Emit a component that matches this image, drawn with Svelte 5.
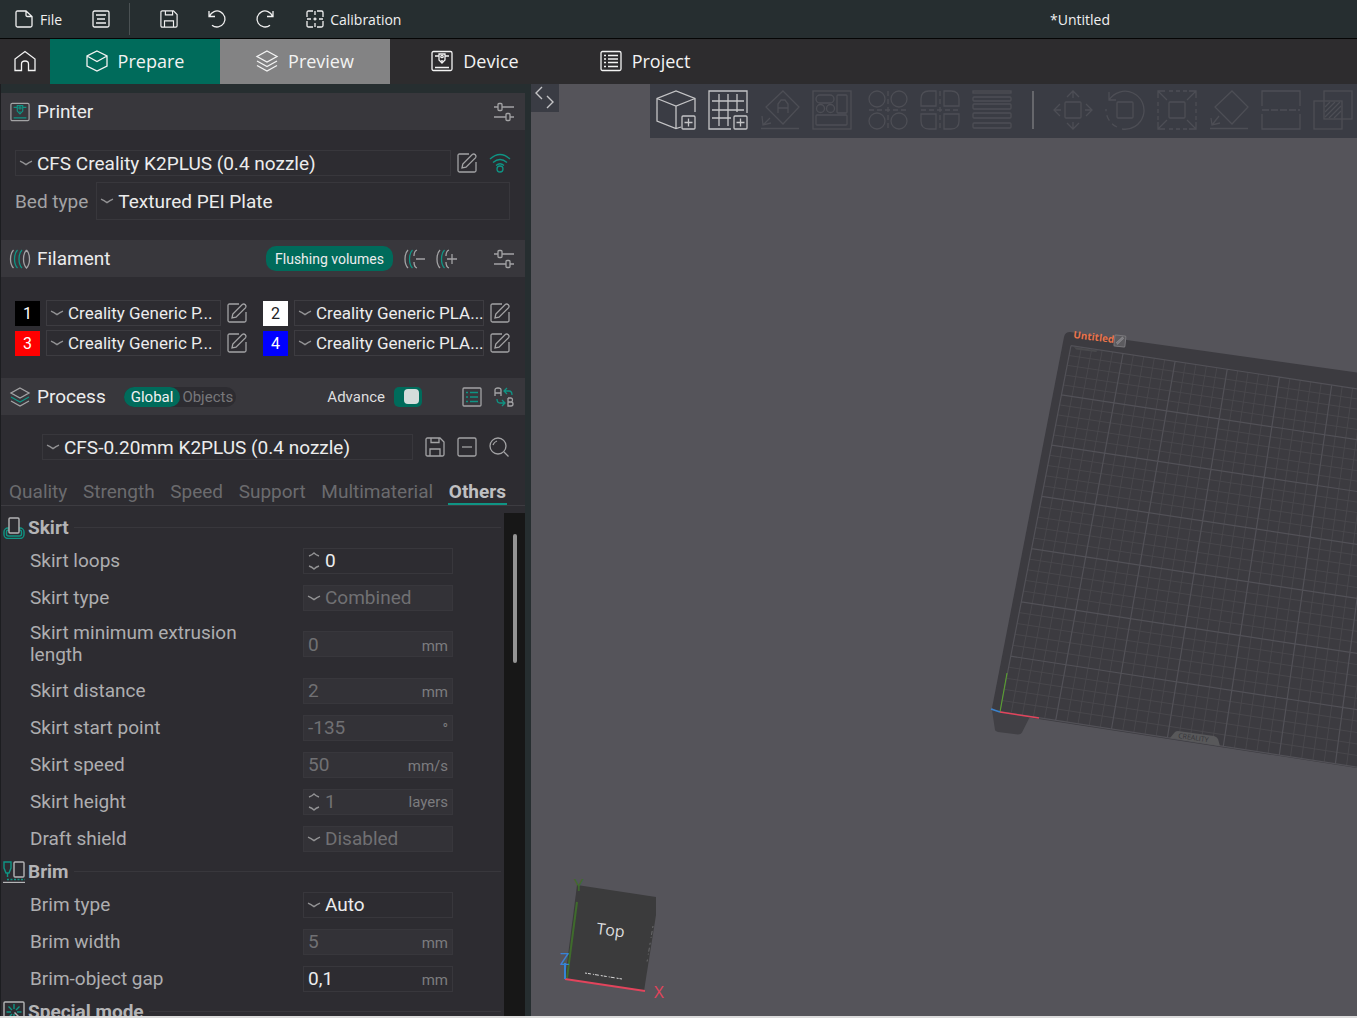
<script lang="ts">
  type Row = {
    id: string;
    label: string;
    kind: 'text' | 'spin' | 'select';
    value: string;
    unit?: string;
    disabled?: boolean;
  };

  const views = ['Prepare', 'Preview', 'Device', 'Project'];
  let view = $state('Prepare');

  const filaments = [
    { id: 1, name: 'Creality Generic P...', color: '#000000', ink: '#ffffff' },
    { id: 2, name: 'Creality Generic PLA...', color: '#ffffff', ink: '#222222' },
    { id: 3, name: 'Creality Generic P...', color: '#ff0000', ink: '#ffffff' },
    { id: 4, name: 'Creality Generic PLA...', color: '#0000ff', ink: '#ffffff' }
  ];

  const pages = ['Quality', 'Strength', 'Speed', 'Support', 'Multimaterial', 'Others'];
  let page = $state('Others');
  let scope = $state('Global');
  let advance = $state(true);

  const skirt: Row[] = [
    { id: 'loops', label: 'Skirt loops', kind: 'spin', value: '0' },
    { id: 'type', label: 'Skirt type', kind: 'select', value: 'Combined', disabled: true },
    { id: 'min', label: 'Skirt minimum extrusion length', kind: 'text', value: '0', unit: 'mm', disabled: true },
    { id: 'distance', label: 'Skirt distance', kind: 'text', value: '2', unit: 'mm', disabled: true },
    { id: 'start', label: 'Skirt start point', kind: 'text', value: '-135', unit: '°', disabled: true },
    { id: 'speed', label: 'Skirt speed', kind: 'text', value: '50', unit: 'mm/s', disabled: true },
    { id: 'height', label: 'Skirt height', kind: 'spin', value: '1', unit: 'layers', disabled: true },
    { id: 'shield', label: 'Draft shield', kind: 'select', value: 'Disabled', disabled: true }
  ];

  const brim: Row[] = [
    { id: 'brim-type', label: 'Brim type', kind: 'select', value: 'Auto' },
    { id: 'brim-width', label: 'Brim width', kind: 'text', value: '5', unit: 'mm', disabled: true },
    { id: 'brim-gap', label: 'Brim-object gap', kind: 'text', value: '0,1', unit: 'mm' }
  ];

  // Projects bed coordinates (one unit = 50 mm) onto the view plane
  const corners = [
    [1071, 345.7],
    [1331.7, 385],
    [1279.3, 755],
    [1000, 711.7]
  ];

  function project(u: number, v: number) {
    const [[x0, y0], [x1, y1], [x2, y2], [x3, y3]] = corners;
    const dx1 = x1 - x2, dx2 = x3 - x2, sx = x0 - x1 + x2 - x3;
    const dy1 = y1 - y2, dy2 = y3 - y2, sy = y0 - y1 + y2 - y3;
    const det = dx1 * dy2 - dx2 * dy1;
    const g = (sx * dy2 - dx2 * sy) / det;
    const h = (dx1 * sy - sx * dy1) / det;
    const s = u / 5, t = v / 7;
    const w = g * s + h * t + 1;
    return [
      ((x1 - x0 + g * x1) * s + (x3 - x0 + h * x3) * t + x0) / w,
      ((y1 - y0 + g * y1) * s + (y3 - y0 + h * y3) * t + y0) / w
    ];
  }

  function line(a: number[], b: number[]) {
    return `M${a[0].toFixed(1)} ${a[1].toFixed(1)}L${b[0].toFixed(1)} ${b[1].toFixed(1)}`;
  }

  let minor = '';
  let major = '';
  for (let i = 0; i <= 35; i++) {
    const k = i / 5;
    const d = line(project(k, 0), project(k, 7)) + line(project(0, k), project(7, k));
    if (i % 5 === 0) major += d;
    else minor += d;
  }
</script>

{#snippet chevron()}
  <svg class="chevron" viewBox="0 0 14 6" aria-hidden="true"><path d="M1 1.2 Q4 2.4 7 4.6 Q10 2.4 13 1.2" /></svg>
{/snippet}

{#snippet edit()}
  <svg class="icon" viewBox="0 0 20 20" aria-hidden="true">
    <path d="M12 1H2.5Q1 1 1 2.500V17.500Q1 19 2.500 19H17.500Q19 19 19 17.500V9M5 15l.8-4L15.500 1.300Q17 .5 18.300 1.800T18.600 4.600L9 14.200z" />
  </svg>
{/snippet}

{#snippet sliders()}
  <svg class="icon" viewBox="0 0 20 20" aria-hidden="true">
    <path d="M0 5h4M8 5h12M0 15h12M16 15h4" /><rect x="4" y="1.500" width="4" height="7" rx="1" /><rect x="12" y="11.500" width="4" height="7" rx="1" />
  </svg>
{/snippet}

{#snippet floppy()}
  <svg class="icon" viewBox="0 0 20 20" aria-hidden="true">
    <path d="M2.500 1H15l4 4v12.500q0 1.500-1.500 1.500h-15Q1 19 1 17.500v-15Q1 1 2.500 1zM6 1v4.500h8V1M5 19v-7h10v7" />
  </svg>
{/snippet}

{#snippet printerIcon(cls: string)}
  <svg class="icon {cls}" viewBox="0 0 22 22" aria-hidden="true">
    <rect x="1" y="1.500" width="20" height="19" rx="1.500" />
    <g class="accent"><path d="M4 6h4M14 6h4M4 17.500h14M8 4h6v6l-3 3-3-3z" /><circle cx="11" cy="6.500" r="1.200" /><path d="M10 11h2" /></g>
  </svg>
{/snippet}

{#snippet settingRow(row: Row)}
  <div class="setting">
    <label for={row.id}>{row.label}</label>
    <div class="field" class:disabled={row.disabled}>
      {#if row.kind === 'select'}
        {@render chevron()}
        <select id={row.id} disabled={row.disabled}><option>{row.value}</option></select>
      {:else}
        {#if row.kind === 'spin'}
          <svg class="spin" viewBox="0 0 14 20" aria-hidden="true"><path d="M2 5Q5 4 7 2Q9 4 12 5M2 15Q5 16 7 18Q9 16 12 15" /></svg>
        {/if}
        <input id={row.id} type="text" class:plain={row.kind === 'text'} value={row.value} disabled={row.disabled} />
        {#if row.unit}<span class="unit">{row.unit}</span>{/if}
      {/if}
    </div>
  </div>
{/snippet}

<div class="app">
  <header class="topbar">
    <button class="file">
      <svg class="icon" viewBox="0 0 18 18" aria-hidden="true"><path d="M11 1H2.500Q1 1 1 2.500v13Q1 17 2.500 17h13q1.500 0 1.500-1.500V6.500zM11 1v4q0 1.500 1.500 1.500H17" /></svg>
      File
    </button>
    <button aria-label="Menu">
      <svg class="icon" viewBox="0 0 18 18" aria-hidden="true"><rect x="1" y="1" width="16" height="16" rx="1.500" /><path d="M4 5h10M5 9h8M4 13h10" /></svg>
    </button>
    <span class="split"></span>
    <button aria-label="Save">{@render floppy()}</button>
    <button aria-label="Undo">
      <svg class="icon" viewBox="0 0 18 18" aria-hidden="true"><path d="M1 1v5.500h6M1.500 6.200A8 8 0 1 1 4 15.200" /></svg>
    </button>
    <button aria-label="Redo">
      <svg class="icon" viewBox="0 0 18 18" aria-hidden="true"><path d="M17 1v5.500h-6M16.500 6.200A8 8 0 1 0 14 15.200" /></svg>
    </button>
    <button class="calibration">
      <svg class="icon" viewBox="0 0 18 18" aria-hidden="true"><path d="M1 7V2.500Q1 1 2.500 1H7M11 1h4.500Q17 1 17 2.500V7M17 11v4.500q0 1.500-1.500 1.500H11M7 17H2.500Q1 17 1 15.500V11M9 1v4M9 13v4M1 9h4M13 9h4M7.500 9h3M9 7.500v3" /></svg>
      Calibration
    </button>
    <span class="title">*Untitled</span>
  </header>

  <nav class="views">
    <button class="home" aria-label="Home">
      <svg class="icon" viewBox="0 0 22 22" aria-hidden="true"><path d="M1 20.500V9L11 1.500 21 9v11.500h-6.500V14q0-3-3.500-3t-3.500 3v6.500z" /></svg>
    </button>
    {#each views as name}
      <button class="view" class:active={view === name} class:hover={name === 'Preview'} onclick={() => (view = name)}>
        {#if name === 'Prepare'}
          <svg class="icon" viewBox="0 0 22 22" aria-hidden="true"><path d="M11 1l10 5v10l-10 5L1 16V6zM1 6l10 5.500L21 6" /></svg>
        {:else if name === 'Preview'}
          <svg class="icon" viewBox="0 0 22 22" aria-hidden="true"><path d="M11 1l10 5.500L11 12 1 6.500zM1 11l10 5.500L21 11M1 15.500L11 21l10-5.500" /></svg>
        {:else if name === 'Device'}
          {@render printerIcon('')}
        {:else}
          <svg class="icon" viewBox="0 0 22 22" aria-hidden="true"><rect x="1" y="1.500" width="20" height="19" rx="1.500" /><path d="M4 5.500h2M8 5.500h10M4 9h2M8 9h10M4 12.500h2M8 12.500h10M4 16.500h2M8 16.500h10" /></svg>
        {/if}
        {name}
      </button>
    {/each}
  </nav>

  <div class="workspace">
    <aside class="sidebar">
      <div class="panel-head">
        {@render printerIcon('teal')}
        <h2>Printer</h2>
        <button class="push" aria-label="Printer settings">{@render sliders()}</button>
      </div>
      <div class="printer">
        <div class="line">
          <div class="field grow">
            {@render chevron()}
            <select aria-label="Printer preset"><option>CFS Creality K2PLUS (0.4 nozzle)</option></select>
          </div>
          <button aria-label="Edit printer">{@render edit()}</button>
          <button class="wifi" aria-label="Connection">
            <svg class="icon teal" viewBox="0 0 20 20" aria-hidden="true"><g class="accent"><path d="M0 6Q10-3 20 6M3 9.500Q10 3.500 17 9.500M6 12.500Q10 9 14 12.500" /><circle cx="10" cy="16" r="3" /></g></svg>
          </button>
        </div>
        <div class="line bed">
          <label for="bed">Bed type</label>
          <div class="field tall grow">
            {@render chevron()}
            <select id="bed"><option>Textured PEI Plate</option></select>
          </div>
        </div>
      </div>

      <div class="panel-head">
        <svg class="icon teal" viewBox="0 0 20 20" aria-hidden="true">
          <path d="M3.500 1Q.5 4 .5 10t3 9M16.500 1q3 3 3 9t-3 9q-3-3-3-9t3-9" />
          <g class="accent"><path d="M7.500 1q-3 3-3 9t3 9M12 1Q9 4 9 10t3 9" /></g>
        </svg>
        <h2>Filament</h2>
        <button class="flush push">Flushing volumes</button>
        <button aria-label="Remove filament">
          <svg class="icon teal" viewBox="0 0 20 20" aria-hidden="true"><path d="M3 1Q0 4 0 10t3 9M12 1Q9 2 9 7M9 13Q9 18 12 19M11 10h9" /><g class="accent"><path d="M7.500 1q-3 3-3 9t3 9" /></g></svg>
        </button>
        <button aria-label="Add filament">
          <svg class="icon teal" viewBox="0 0 20 20" aria-hidden="true"><path d="M3 1Q0 4 0 10t3 9M12 1Q9 2 9 7M9 13Q9 18 12 19M10 10h10M15 5v10" /><g class="accent"><path d="M7.500 1q-3 3-3 9t3 9" /></g></svg>
        </button>
        <button class="apart" aria-label="Filament settings">{@render sliders()}</button>
      </div>
      <div class="filaments">
        {#each filaments as f (f.id)}
          <div class="filament">
            <button class="swatch" style="background: {f.color}; color: {f.ink}">{f.id}</button>
            <div class="field small grow">
              {@render chevron()}
              <select aria-label="Filament {f.id}"><option>{f.name}</option></select>
            </div>
            <button aria-label="Edit filament {f.id}">{@render edit()}</button>
          </div>
        {/each}
      </div>

      <div class="panel-head">
        <svg class="icon teal" viewBox="0 0 20 20" aria-hidden="true"><path d="M10 1l9 5-9 5-9-5zM1 14l9 5 9-5" /><g class="accent"><path d="M1 10l9 5 9-5" /></g></svg>
        <h2>Process</h2>
        <div class="scope">
          {#each ['Global', 'Objects'] as s}
            <button class:on={scope === s} onclick={() => (scope = s)}>{s}</button>
          {/each}
        </div>
        <label class="advance push">Advance <input type="checkbox" bind:checked={advance} /></label>
        <button class="apart" aria-label="Parameter list">
          <svg class="icon teal" viewBox="0 0 20 20" aria-hidden="true"><rect x="1" y="1" width="18" height="18" rx="1" /><g class="accent"><path d="M4 5.500h2M8 5.500h8M4 10h2M8 10h8M4 14.500h2M8 14.500h8" /></g></svg>
        </button>
        <button aria-label="Compare presets">
          <svg class="icon teal" viewBox="0 0 20 20" aria-hidden="true"><path d="M1 9V3q0-2 3-2t3 2v6M1 6h6M14 11v8h3q2 0 2-2t-2-2h-3M14 15h3q1.500 0 1.500-2T17 11h-3" /><g class="accent"><path d="M13 1l-3 3 3 3M10 4h5q3 0 3 4M3 12q0 4 3 4h4M8 13l3 3-3 3" /></g></svg>
        </button>
      </div>
      <div class="preset">
        <div class="field grow">
          {@render chevron()}
          <select aria-label="Process preset"><option>CFS-0.20mm K2PLUS (0.4 nozzle)</option></select>
        </div>
        <button aria-label="Save preset">{@render floppy()}</button>
        <button aria-label="Delete preset">
          <svg class="icon" viewBox="0 0 20 20" aria-hidden="true"><rect x="1" y="1" width="18" height="18" rx="1.500" /><path d="M5 10h10" /></svg>
        </button>
        <button aria-label="Search">
          <svg class="icon" viewBox="0 0 20 20" aria-hidden="true"><circle cx="9" cy="9" r="8" /><path d="M15 15l4.500 4.500M4 8Q5 5 8 4" /></svg>
        </button>
      </div>
      <div class="pages">
        {#each pages as p}
          <button class:current={page === p} onclick={() => (page = p)}>{p}</button>
        {/each}
      </div>

      <div class="settings">
        <div class="list">
          <h3>
            <svg class="group teal" viewBox="0 0 22 22" aria-hidden="true"><g class="accent"><rect x="1" y="11" width="20" height="10.500" rx="4" /><rect x="3.500" y="13" width="15" height="6" rx="2" /></g><rect class="solid" x="6" y="1" width="10" height="15" rx="1" /></svg>
            <span>Skirt</span>
          </h3>
          {#each skirt as row (row.id)}
            {@render settingRow(row)}
          {/each}
          <h3>
            <svg class="group teal" viewBox="0 0 22 22" aria-hidden="true"><rect x="11" y="1" width="10" height="15" rx="1" /><path d="M0 21.500h22" /><g class="accent"><path d="M1 1h7v6l-2 5H3L1 7zM4.500 12v4" /><path stroke-dasharray="2 1.500" d="M4 18.500h18" /></g></svg>
            <span>Brim</span>
          </h3>
          {#each brim as row (row.id)}
            {@render settingRow(row)}
          {/each}
          <h3>
            <svg class="group teal" viewBox="0 0 22 22" aria-hidden="true"><rect x="1" y="1" width="20" height="20" rx="1" /><g class="accent"><path d="M11 3v5M11 13v5M3.500 11H8M14 11h4.500M5.500 5.500L9 9M16.500 5.500L13 9M5.500 16.500L9 13" /></g><path d="M11.500 11.500L18 18" /></svg>
            <span>Special mode</span>
          </h3>
        </div>
        <div class="track"><div class="thumb"></div></div>
      </div>
    </aside>

    <main class="canvas">
      <svg class="scene" viewBox="531 84 826 932" preserveAspectRatio="xMinYMin slice" role="img" aria-label="Build plate">
        <path fill="#3c3b40" d="M992 708L1064 337Q1065 332 1070 332L1500 392.500V790L1000 713z" />
        <path fill="#414045" d="M992 710l3 20q0 1 3 2l20 2.500q3 0 4-2l8-16z" />
        <path fill="#4a4a4d" d="M1074 347l24 3.500-2 1.500-20-2.500z" />
        <path class="minor" d={minor} />
        <path class="major" d={major} />
        <path fill="#58585a" d="M1170 738l5-6q1-1 3-1l36 5q3 1 4 3l2 7z" />
        <text class="brand" transform="translate(1178 738) rotate(8)">CREALITY</text>
        <path stroke="#58a52b" d="M1000 712l7-39" />
        <path stroke="#e2445c" stroke-width="1.500" d="M1000 712l39 6" />
        <path stroke="#3b82cc" stroke-width="1.500" d="M991 709l9 3" />
        <text class="plate-name" transform="translate(1073 338) rotate(7)">Untitled</text>
        <g transform="translate(1115 335) rotate(6)"><rect width="11" height="11" rx="1" fill="#5c5b5f" stroke="#79787c" /><path stroke="#8d8c90" d="M3 9l6-7M2 8l6-7" /></g>

        <path fill="#3b3b3c" d="M577 885l79 12v18l-12 76-79-12z" />
        <path stroke="#3f6b2c" stroke-width="2" d="M567 978l10-76" />
        <path stroke="#e2445c" stroke-width="2" d="M565 979l80 12" />
        <path stroke="#3584d6" stroke-width="2" d="M565 979v-16" />
        <path stroke="#d8d8d8" stroke-dasharray="2 1 3 2 1 1 4 2" d="M585 973l37 6" />
        <path stroke="#69696b" stroke-dasharray="2 3 4 2 1 5" d="M653 926l-6 36" />
        <text class="cube-face" transform="translate(596 934) rotate(7)">Top</text>
        <text class="axis" fill="#3f6b2c" x="574" y="891">Y</text>
        <text class="axis" fill="#3584d6" x="560" y="965">Z</text>
        <text class="axis" fill="#e2445c" x="654" y="998">X</text>
      </svg>

      <div class="overlay">
        <button class="collapse" aria-label="Collapse sidebar">
          <svg viewBox="0 0 28 28" aria-hidden="true"><path d="M11 3L5 9l6 6M16 12l6 6-6 6" /></svg>
        </button>
        <div class="tools">
          <button aria-label="Add model"><svg viewBox="0 0 40 40" aria-hidden="true"><path d="M25 37l-5 1.500L1 31V8.500L20 1l19 7.500V22M1 8.500L20 16l19-7.500M20 16v22" /><rect x="26" y="26" width="13" height="13" rx="1" /><path d="M28.500 32.500h8M32.500 28.500v8" /></svg></button>
          <button aria-label="Add plate"><svg viewBox="0 0 40 40" aria-hidden="true"><path d="M23 39H1V1h38v22M4 11h32M4 20h32M4 28h19M11 4v32M20 4v32M29 4v18" /><rect x="26" y="26" width="13" height="13" rx="1" /><path d="M28.500 32.500h8M32.500 28.500v8" /></svg></button>
          <button disabled aria-label="Auto orient"><svg viewBox="0 0 40 40" aria-hidden="true"><path d="M23 1l16 16-16 17L6 17zM18 23v-9l3-4h4l3 4v9M18 18h10M1 38.500h38M10 28l-7 7M2 26l1 9 8-2" /></svg></button>
          <button disabled aria-label="Arrange"><svg viewBox="0 0 40 40" aria-hidden="true"><rect x="1" y="1" width="38" height="38" /><rect x="4" y="5" width="18" height="8" rx="4" /><rect x="25" y="5" width="10" height="18" rx="1" /><circle cx="8.500" cy="18.500" r="4" /><circle cx="18.500" cy="18.500" r="4" /><rect x="4" y="25" width="31" height="10" rx="1" /></svg></button>
          <button class="wide" disabled aria-label="Split to objects"><svg viewBox="0 0 40 40" aria-hidden="true"><circle cx="9" cy="9" r="8" /><circle cx="31" cy="9" r="8" /><circle cx="9" cy="31" r="8" /><circle cx="31" cy="31" r="8" /><path stroke-dasharray="5 3" d="M20 1v38M1 20h38" /></svg></button>
          <button disabled aria-label="Split to parts"><svg viewBox="0 0 40 40" aria-hidden="true"><path d="M16 1v15H1V9q0-8 8-8zM24 1h7q8 0 8 8v7H24zM1 24h15v15H9q-8 0-8-8zM24 24h15v7q0 8-8 8h-7z" /><path stroke-dasharray="5 3" d="M20 1v38M1 20h38" /></svg></button>
          <button disabled aria-label="Layer height"><svg viewBox="0 0 40 40" aria-hidden="true"><rect x="1" y="1" width="38" height="2" /><rect x="1" y="7" width="38" height="4" rx="1" /><rect x="1" y="14" width="38" height="5" rx="1" /><rect x="1" y="23" width="38" height="5" rx="1" /><rect x="1" y="33" width="38" height="5" rx="1" /></svg></button>
          <span class="divider"></span>
          <button disabled aria-label="Move"><svg viewBox="0 0 40 40" aria-hidden="true"><rect x="12" y="12" width="16" height="16" rx="1" /><path d="M20 8V1M14 7l6-6 6 6M20 32v7M14 33l6 6 6-6M8 20H1M7 14l-6 6 6 6M32 20h7M33 14l6 6-6 6" /></svg></button>
          <button disabled aria-label="Rotate"><svg viewBox="0 0 40 40" aria-hidden="true"><rect x="12" y="12" width="16" height="16" rx="1" /><path d="M4 10A19 19 0 1 1 17 39M4 2v8h7" /><path stroke-dasharray="6 4" d="M12 37A19 19 0 0 1 1 19" /></svg></button>
          <button disabled aria-label="Scale"><svg viewBox="0 0 40 40" aria-hidden="true"><rect x="12" y="12" width="16" height="16" rx="1" /><path d="M1 8V1h7M32 1h7v7M39 32v7h-7M8 39H1v-7M1 1l9 9M39 1l-9 9M39 39l-9-9M1 39l9-9" /><path stroke-dasharray="4 3" d="M12 1h18M12 39h18M1 12v18M39 12v18" /></svg></button>
          <button disabled aria-label="Lay on face"><svg viewBox="0 0 40 40" aria-hidden="true"><path d="M23 1l16 16-16 17L6 17zM1 38.500h38M10 26l-7 9M2 28l1 7 8-2" /></svg></button>
          <button disabled aria-label="Cut"><svg viewBox="0 0 40 40" aria-hidden="true"><path d="M1 16V1h38v15M1 24v15h38V24" /><path stroke-dasharray="7 2" d="M1 20h38" /></svg></button>
          <button disabled aria-label="Boolean"><svg viewBox="0 0 40 40" aria-hidden="true"><rect x="11" y="1" width="28" height="28" /><rect x="1" y="11" width="28" height="28" /><path d="M12 17l5-5M12 22l10-10M12 27l15-15M16 28l12-12M21 28l7-7" /></svg></button>
        </div>
      </div>
    </main>
  </div>
</div>

<style>
  :global(body) {
    margin: 0;
    background: #dcdcdc;
  }

  .app {
    display: flex;
    flex-direction: column;
    box-sizing: border-box;
    height: 100vh;
    padding-bottom: 2px;
    overflow: hidden;
    font-family: Roboto, 'Noto Sans', sans-serif;
    font-size: 19px;
    color: #ececed;
  }

  button,
  input,
  select {
    margin: 0;
    padding: 0;
    border: 0;
    background: none;
    font: inherit;
    color: inherit;
  }

  button {
    display: flex;
    align-items: center;
    justify-content: center;
    flex-shrink: 0;
  }

  svg {
    display: block;
    flex-shrink: 0;
    fill: none;
    stroke: currentColor;
  }

  .icon {
    width: 20px;
    height: 20px;
    stroke-width: 1.3;
    overflow: visible;
  }

  .topbar {
    display: flex;
    align-items: center;
    flex: 0 0 38px;
    padding-left: 15px;
    background: #262e30;
    border-bottom: 1px solid #050505;
    font-family: 'Open Sans', 'Noto Sans', sans-serif;
    font-size: 14px;
    gap: 30px;
    color: #f1f1f1;
  }

  .topbar .icon {
    width: 18px;
    height: 18px;
  }

  .file {
    gap: 7px;
  }

  .split {
    width: 1px;
    height: 32px;
    margin-left: -11px;
    background: #4a5153;
  }

  .calibration {
    margin-left: 2px;
    gap: 6px;
  }

  .topbar .title {
    margin-left: auto;
    margin-right: 247px;
  }

  .views {
    display: flex;
    flex: 0 0 45px;
    background: #2d2c2e;
    font-family: 'Open Sans', 'Noto Sans', sans-serif;
    font-size: 18px;
    color: #f3f3f3;
  }

  .views button {
    padding-bottom: 2px;
  }

  .views .icon {
    width: 22px;
    height: 22px;
  }

  .home {
    width: 50px;
  }

  .view {
    width: 170px;
    gap: 10px;
  }

  .view.hover {
    background: #838384;
  }

  .view.active {
    background: #006b5b;
  }

  .workspace {
    display: flex;
    flex: 1;
    min-height: 0;
  }

  .sidebar {
    display: flex;
    flex-direction: column;
    flex: 0 0 531px;
    box-sizing: border-box;
    padding-top: 9px;
    border-left: 1px solid #1c1d20;
    border-right: 6px solid #262e30;
    background: linear-gradient(#262e30 9px, #2d2c31 9px);
    color: #a3a3a5;
  }

  .panel-head {
    display: flex;
    align-items: center;
    flex: 0 0 37px;
    gap: 12px;
    padding: 0 11px 0 9px;
    background: #38373c;
  }

  .panel-head h2 {
    margin: 0 0 0 -5px;
    font-size: 19px;
    font-weight: 400;
    color: #ececed;
  }

  .push {
    margin-left: auto;
  }

  .apart {
    margin-left: 25px;
  }

  .teal .accent {
    stroke: #0f9484;
  }

  .printer {
    padding: 20px 15px 20px 14px;
  }

  .line {
    display: flex;
    align-items: center;
    gap: 6px;
  }

  .bed {
    gap: 8px;
    margin-top: 6px;
  }

  .wifi {
    margin-left: 7px;
  }

  .field {
    display: flex;
    align-items: center;
    box-sizing: border-box;
    height: 26px;
    min-width: 0;
    border: 1px solid #38373c;
    padding-left: 3px;
    gap: 4px;
    color: #ececed;
  }

  .field.tall {
    height: 38px;
  }

  .field.small {
    font-size: 17px;
    border-color: #3d3c41;
  }

  .grow {
    flex: 1;
  }

  .field select,
  .field input {
    flex: 1;
    width: 0;
    min-width: 0;
    height: 100%;
    appearance: none;
    outline: none;
    opacity: 1;
  }

  .field input.plain {
    padding-left: 1px;
  }

  .field.disabled {
    background: #333237;
    color: #707073;
  }

  .chevron {
    width: 14px;
    height: 6px;
    stroke: #929294;
    stroke-width: 1.4;
  }

  .spin {
    width: 14px;
    height: 20px;
    stroke: #929294;
    stroke-width: 1.4;
  }

  .unit {
    padding-right: 4px;
    font-size: 15px;
    line-height: 20px;
    color: #7c7c7f;
  }

  .plain + .unit {
    padding-top: 3px;
  }

  .filaments {
    display: grid;
    grid-template-columns: 232fr 247fr;
    gap: 4px 16px;
    padding: 23px 15px 22px 14px;
  }

  .filament {
    display: flex;
    align-items: center;
    gap: 6px;
  }

  .swatch {
    width: 25px;
    height: 25px;
    font-size: 16px;
  }

  .flush {
    height: 25px;
    padding: 0 9px;
    border-radius: 10px;
    background: #006b5b;
    font-size: 14px;
    color: #ececed;
  }

  .scope {
    display: flex;
    margin-left: 6px;
    border-radius: 10px;
    background: #2d2c31;
    font-size: 15px;
  }

  .scope button {
    height: 20px;
    padding: 0 3px 0 2px;
    color: #77777a;
  }

  .scope button.on {
    padding: 0 7px;
    border-radius: 10px;
    background: #006b5b;
    color: #f1f1f1;
  }

  .advance {
    display: flex;
    align-items: center;
    gap: 9px;
    font-size: 15px;
    color: #dededf;
  }

  .advance + .apart {
    margin-left: 28px;
  }

  .advance input {
    appearance: none;
    display: flex;
    box-sizing: border-box;
    width: 28px;
    height: 20px;
    padding: 2px 3px;
    border-radius: 5px;
    background: #55545a;
  }

  .advance input::before {
    content: '';
    width: 15px;
    height: 15px;
    border-radius: 4px;
    background: #d4dcdb;
  }

  .advance input:checked {
    justify-content: flex-end;
    background: #006b5b;
  }

  .preset {
    display: flex;
    align-items: center;
    gap: 12px;
    padding: 19px 16px 0 41px;
  }

  .pages {
    display: flex;
    justify-content: space-between;
    height: 45px;
    padding: 0 18px 0 7px;
    border-bottom: 1px solid #3d3c41;
    color: #6b6b6e;
  }

  .pages button {
    height: 45px;
    padding: 20px 1px 0;
    border-bottom: 2px solid transparent;
  }

  .pages .current {
    border-color: #0f9484;
    font-weight: 700;
    color: #c0c0c2;
  }

  .settings {
    display: flex;
    flex: 1;
    min-height: 0;
    padding-top: 7px;
    overflow: hidden;
  }

  .list {
    flex: 1;
    color: #aeaeb0;
  }

  h3 {
    display: flex;
    align-items: center;
    gap: 3px;
    height: 29px;
    margin: 0;
    padding: 0 3px 0 2px;
    font-size: 19px;
    font-weight: 700;
    color: #b4b4b6;
  }

  h3::after {
    content: '';
    flex: 1;
    height: 1px;
    margin-left: 2px;
    background: #38373c;
  }

  .group {
    width: 22px;
    height: 22px;
    stroke-width: 1.4;
  }

  .group .solid {
    fill: #2d2c31;
  }

  .setting {
    display: grid;
    grid-template-columns: 230px 150px;
    column-gap: 43px;
    align-items: center;
    min-height: 37px;
    padding-left: 29px;
    line-height: 22px;
  }

  .setting label {
    padding: 6px 0;
  }

  .track {
    width: 21px;
    padding-top: 21px;
    box-sizing: border-box;
    background: #171717;
  }

  .thumb {
    width: 4px;
    height: 129px;
    margin-left: 9px;
    border-radius: 2px;
    background: #949494;
  }

  .canvas {
    position: relative;
    flex: 1;
    min-width: 0;
    overflow: hidden;
    background: #55545a;
  }

  .scene {
    position: absolute;
    inset: 0;
    width: 100%;
    height: 100%;
    stroke: none;
  }

  .scene text {
    font-family: 'Open Sans', 'Noto Sans', sans-serif;
  }

  .scene .minor {
    stroke: #49484d;
    stroke-width: 0.9;
  }

  .scene .major {
    stroke: #525157;
    stroke-width: 1.2;
  }

  .scene .brand {
    fill: #343438;
    font-size: 7px;
  }

  .scene .plate-name {
    fill: #e8744c;
    font-size: 10px;
    font-weight: 700;
  }

  .scene .cube-face {
    fill: #dededf;
    font-size: 16px;
  }

  .scene .axis {
    font-size: 17px;
  }

  .overlay {
    position: relative;
    display: flex;
    align-items: flex-start;
    gap: 91px;
  }

  .collapse,
  .tools {
    background: #3a3c44;
    color: #c4c4c6;
  }

  .collapse svg {
    width: 28px;
    height: 28px;
    stroke-width: 1.4;
  }

  .tools {
    display: flex;
    align-items: center;
    flex: 1;
    min-width: 0;
    gap: 12px;
    padding: 6px 0 8px 6px;
    overflow: hidden;
  }

  .tools svg {
    width: 40px;
    height: 40px;
    stroke-width: 1.3;
  }

  .tools button:disabled {
    color: #4d4e55;
  }

  .tools .wide {
    margin-left: 4px;
  }

  .divider {
    width: 2px;
    height: 38px;
    margin: 0 7px 0 8px;
    background: #66676c;
  }
</style>
